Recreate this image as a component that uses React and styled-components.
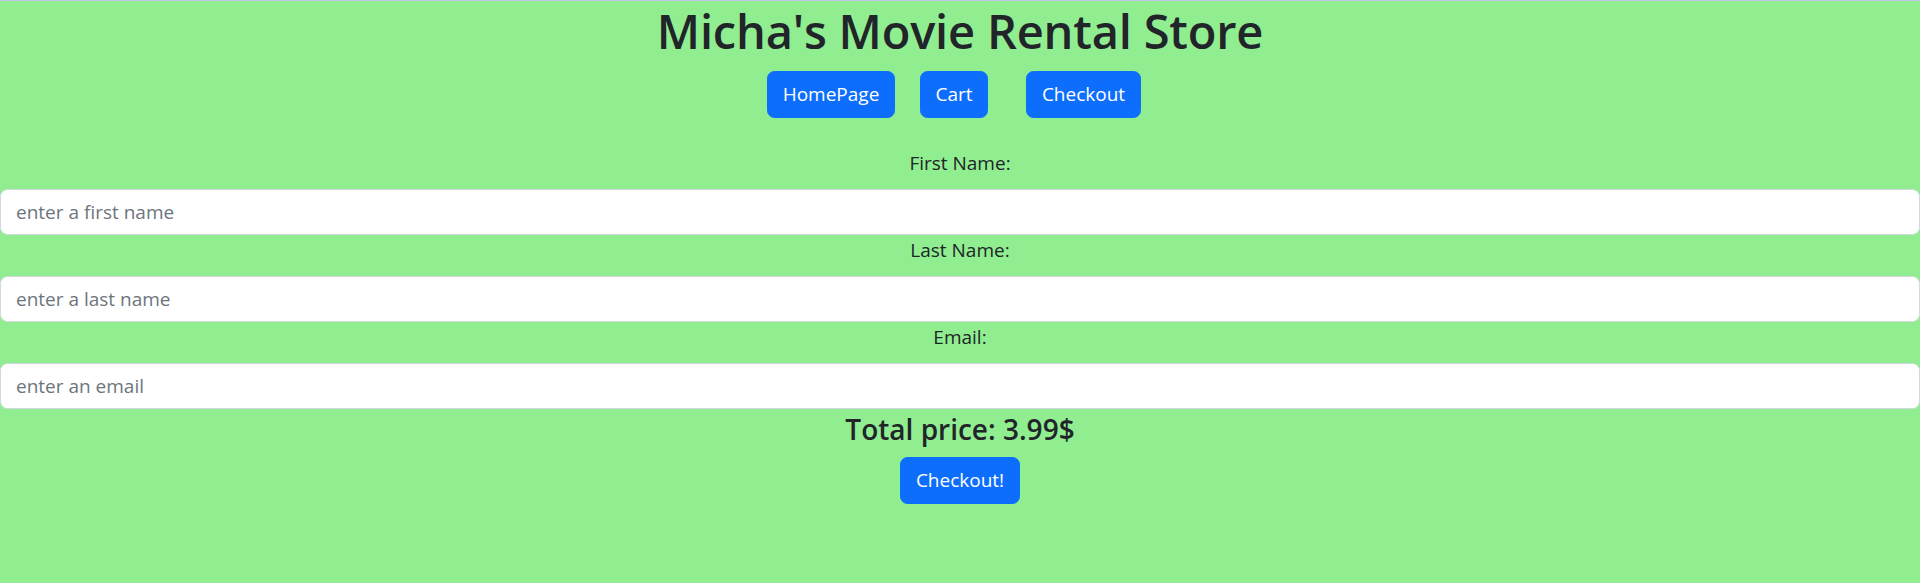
import React from "react";
import styled, {createGlobalStyle} from "styled-components";

const GlobalStyle = createGlobalStyle`
    html, body {
        margin: 0;
        padding: 0;
        background: #90ee90;
    }
    body {
        font-family: "Open Sans", "Noto Sans", sans-serif;
        color: #212529;
        border-top: 1px solid #bfc3ec;
    }
    * {
        box-sizing: border-box;
    }
`;

const Page = styled.div`
    display: flex;
    flex-direction: column;
    align-items: center;
    text-align: center;
    min-height: 582px;
`;

const Title = styled.h1`
    margin: 0 0 10px;
    font-size: 47px;
    line-height: 60px;
    font-weight: 600;
    letter-spacing: -0.2px;
`;

const Nav = styled.div`
    display: flex;
    justify-content: center;
    padding-right: 12px;
`;

const Button = styled.button`
    width: ${p => p.$w}px;
    height: 47px;
    margin-right: ${p => p.$gap || 0}px;
    padding: 0;
    border: 1px solid #0d6efd;
    border-radius: 7.5px;
    background: #0d6efd;
    color: #fff;
    font-family: inherit;
    font-size: 19px;
    line-height: 45px;
    cursor: pointer;
`;

const Form = styled.form`
    width: 100%;
    margin-top: 30px;
    display: flex;
    flex-direction: column;
    align-items: center;
`;

const Label = styled.label`
    display: block;
    font-size: 19px;
    line-height: 30px;
    margin-bottom: 11px;
`;

const Input = styled.input`
    display: block;
    width: 100%;
    height: 46px;
    padding: 0 15px;
    border: 1px solid #d3d8de;
    border-radius: 7.5px;
    background: #fff;
    font-family: inherit;
    font-size: 19px;
    color: #212529;
    outline: none;

    &::placeholder {
        color: #6c757d;
    }
`;

const Total = styled.h4`
    margin: 2px 0 10px;
    font-size: 28px;
    line-height: 36px;
    font-weight: 600;
`;

const fields = [
    {id: "firstName", label: "First Name:", placeholder: "enter a first name"},
    {id: "lastName", label: "Last Name:", placeholder: "enter a last name"},
    {id: "email", label: "Email:", placeholder: "enter an email"},
];

export default function App() {
    return (
        <>
            <GlobalStyle/>
            <Page>
                <Title>Micha's Movie Rental Store</Title>
                <Nav>
                    <Button $w={128} $gap={25}>HomePage</Button>
                    <Button $w={68} $gap={38}>Cart</Button>
                    <Button $w={115}>Checkout</Button>
                </Nav>
                <Form onSubmit={e => e.preventDefault()}>
                    {fields.map(f => (
                        <React.Fragment key={f.id}>
                            <Label htmlFor={f.id}>{f.label}</Label>
                            <Input id={f.id} placeholder={f.placeholder}/>
                        </React.Fragment>
                    ))}
                    <Total>Total price: 3.99$</Total>
                    <Button $w={120} type="submit">Checkout!</Button>
                </Form>
            </Page>
        </>
    );
}
